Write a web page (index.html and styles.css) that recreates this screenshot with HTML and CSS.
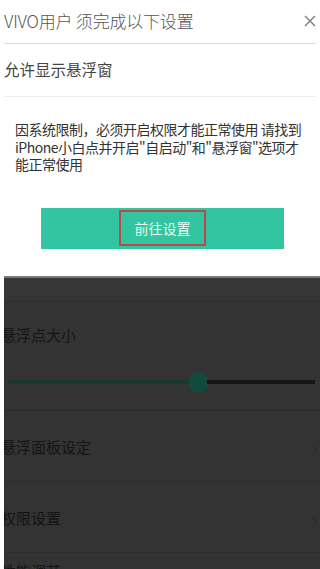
FILE: index.html
```html
<!DOCTYPE html>
<html lang="zh">
<head>
<meta charset="utf-8">
<link rel="stylesheet" href="styles.css">
</head>
<body>
<div class="dialog">
  <div class="head">
    <span class="title">VIVO用户 须完成以下设置</span>
    <svg class="close" width="12" height="12" viewBox="0 0 12 12"><path d="M1 1L11 11M11 1L1 11" stroke="#777" stroke-width="1.3" fill="none"/></svg>
  </div>
  <div class="sub">允许显示悬浮窗</div>
  <p class="msg">因系统限制，必须开启权限才能正常使用 请找到iPhone小白点并开启"自启动"和"悬浮窗"选项才能正常使用</p>
  <div class="btnwrap">
    <div class="btn"><span class="mark">前往设置</span></div>
  </div>
</div>
<div class="dark">
  <div class="strip"></div>
  <div class="label">悬浮点大小</div>
  <div class="slider">
    <div class="fill"></div>
    <div class="thumb"></div>
    <div class="rest"></div>
  </div>
  <div class="row first"><span>悬浮面板设定</span><span class="chev">›</span></div>
  <div class="row"><span>权限设置</span><span class="chev">›</span></div>
  <div class="row last"><span>性能调节</span><span class="chev">›</span></div>
</div>
</body>
</html>
```
FILE: styles.css
```css
html, body { margin: 0; padding: 0; background: #fff; }
body { width: 320px; height: 569px; overflow: hidden; font-family: "Noto Sans CJK SC", "Liberation Sans", sans-serif; }
.dialog { padding: 0 4px; height: 276px; box-sizing: border-box; }
.head { display: flex; justify-content: space-between; align-items: center; height: 43px; border-bottom: 1px solid #dcdcdc; }
.title { font-size: 17px; color: #555; font-weight: 300; letter-spacing: -0.2px; margin-top: -2px; }
.close { margin-top: -2px; }
.sub { height: 52px; line-height: 50px; font-size: 15.5px; color: #444; border-bottom: 1px solid #ececec; }
.msg { margin: 24px 4px 0 11px; font-size: 14px; line-height: 17.5px; color: #333; letter-spacing: -0.5px; }
.btnwrap { display: flex; padding: 34px 0 0 37px; }
.btn { width: 243px; height: 41px; background: #33c4a1; display: flex; justify-content: center; align-items: center; }
.mark { width: 83px; height: 32px; border: 2px solid #b84a48; display: flex; align-items: center; justify-content: center; color: #eafaf3; font-size: 14px; }
.dark { margin-left: 4px; background: #333; height: 293px; border-top: 2px solid #7a7a7a; overflow: hidden; color: #141414; }
.strip { height: 22px; background: #363636; border-bottom: 1px solid #303030; }
.label { font-size: 15px; margin: 23px 0 0 -3px; height: 22px; line-height: 22px; }
.slider { display: flex; align-items: center; margin: 25px 5px 0 5px; height: 22px; }
.fill { width: 181px; height: 4px; background: #17392f; border-radius: 2px; }
.thumb { width: 21px; height: 21px; border-radius: 50%; background: #134a3c; margin: 0 -2px; }
.rest { flex: 1; height: 4px; background: #161616; }
.row { display: flex; justify-content: space-between; align-items: center; height: 70px; font-size: 15px; margin-left: -3px; border-bottom: 1px solid #2e2e2e; }
.first { margin-top: 17px; border-top: 1px solid #2b2b2b; }
.chev { color: #2c2c2c; font-size: 26px; font-weight: 200; margin-right: 2px; }
.last { align-items: flex-start; padding-top: 7px; }
```
